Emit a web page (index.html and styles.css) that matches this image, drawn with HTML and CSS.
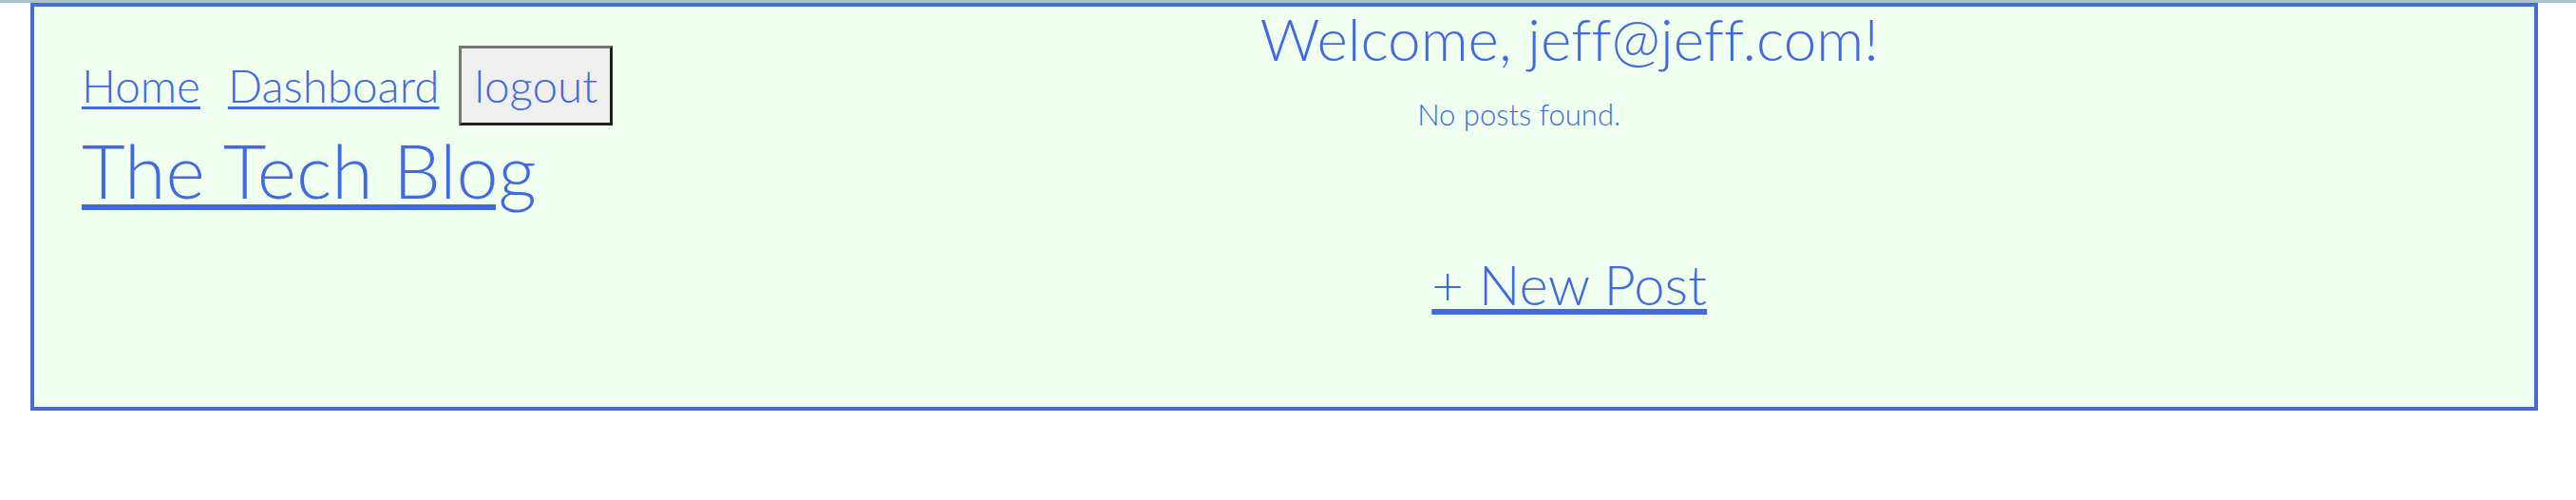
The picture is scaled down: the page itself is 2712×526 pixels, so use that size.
FILE: index.html
```html
<!DOCTYPE html>
<html lang="en">
<head>
<meta charset="utf-8">
<title>The Tech Blog</title>
<link rel="stylesheet" href="styles.css">
</head>
<body>
<div class="topbar"></div>
<div class="page">
  <header class="site-header">
    <nav class="nav">
      <a class="nav-link" href="#">Home</a>
      <a class="nav-link" href="#">Dashboard</a>
      <button class="logout" type="button">logout</button>
    </nav>
    <h1 class="title"><a class="title-link" href="#">The Tech Blog</a></h1>
  </header>
  <main class="dashboard">
    <h2 class="welcome">Welcome, jeff@jeff.com!</h2>
    <p class="empty">No posts found.</p>
    <a class="new-post" href="#">+ New Post</a>
  </main>
</div>
</body>
</html>
```

FILE: styles.css
```css
* { box-sizing: border-box; }

html, body {
  margin: 0;
  padding: 0;
  background: #ffffff;
}

body {
  font-family: Lato, "Open Sans", sans-serif;
  font-weight: 300;
  font-variant-ligatures: none;
  color: #4169e1;
}

.topbar {
  height: 3px;
  background: #a9c4c9;
}

.page {
  margin: 0 40px 0 32px;
  height: 429px;
  border: 4px solid #4a6ad8;
  background: #f0fff0;
  display: flex;
}

.site-header {
  flex: 0 0 607px;
  padding: 41px 0 0 50px;
}

.nav {
  display: flex;
  align-items: baseline;
  gap: 29px;
}

.nav-link {
  font-size: 47.6px;
  line-height: 1;
  color: #4169e1;
  text-decoration: underline;
  text-decoration-thickness: 3px;
  text-underline-offset: 4px;
}

.logout {
  margin-left: -8px;
  font-family: inherit;
  font-weight: 300;
  font-size: 47.6px;
  line-height: 1;
  color: #4169e1;
  background: #efefef;
  border: 3px solid;
  border-color: #767676 #1f1f1f #1f1f1f #767676;
  padding: 15px 13px 15px;
}

.title {
  margin: 7px 0 0;
  font-weight: 300;
  font-size: 79px;
  line-height: 1;
}

.title-link {
  color: #4169e1;
  text-decoration: underline;
  text-decoration-thickness: 6px;
  text-underline-offset: 6px;
}

.dashboard {
  flex: 1 1 auto;
  padding-right: 9px;
  text-align: center;
}

.welcome {
  margin: 2px 0 0;
  font-weight: 300;
  font-size: 62px;
  line-height: 1;
}

.empty {
  margin: 34px 0 0;
  padding-right: 106px;
  font-size: 31px;
  line-height: 1;
}

.new-post {
  display: inline-block;
  margin-top: 134px;
  font-size: 58px;
  line-height: 1;
  color: #4169e1;
  text-decoration: underline;
  text-decoration-thickness: 6px;
  text-underline-offset: 4px;
}
```
